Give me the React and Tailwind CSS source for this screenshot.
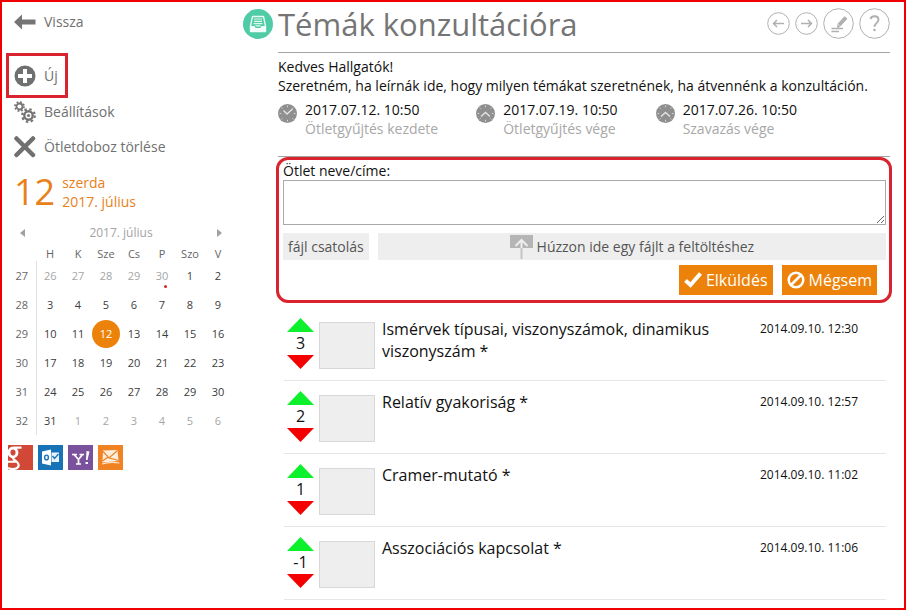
import { useState } from 'react';

const weeks = [
  { no: 27, days: [26, 27, 28, 29, 30, 1, 2] },
  { no: 28, days: [3, 4, 5, 6, 7, 8, 9] },
  { no: 29, days: [10, 11, 12, 13, 14, 15, 16] },
  { no: 30, days: [17, 18, 19, 20, 21, 22, 23] },
  { no: 31, days: [24, 25, 26, 27, 28, 29, 30] },
  { no: 32, days: [31, 1, 2, 3, 4, 5, 6] },
];

const deadlines = [
  { date: '2017.07.12. 10:50', label: 'Ötletgyűjtés kezdete', down: true },
  { date: '2017.07.19. 10:50', label: 'Ötletgyűjtés vége' },
  { date: '2017.07.26. 10:50', label: 'Szavazás vége' },
];

const ideas = [
  { title: 'Ismérvek típusai, viszonyszámok, dinamikus viszonyszám *', votes: 3, date: '2014.09.10. 12:30' },
  { title: 'Relatív gyakoriság *', votes: 2, date: '2014.09.10. 12:57' },
  { title: 'Cramer-mutató *', votes: 1, date: '2014.09.10. 11:02' },
  { title: 'Asszociációs kapcsolat *', votes: -1, date: '2014.09.10. 11:06' },
];

function BackIcon() {
  return (
    <svg className="w-[22px] h-[22px] shrink-0" viewBox="0 0 22 22" fill="#757575">
      <path d="M0 11L8 3.5V8.500H21.500V13.500H8V18.500Z" />
    </svg>
  );
}

function PlusIcon() {
  return (
    <svg className="w-[22px] h-[22px] shrink-0" viewBox="0 0 22 22">
      <circle cx="11" cy="11" r="10.500" fill="#707070" />
      <path d="M11 4V18M4 11H18" stroke="#fff" strokeWidth="4" />
    </svg>
  );
}

function GearsIcon() {
  return (
    <svg className="w-[22px] h-[22px] shrink-0" viewBox="0 0 22 22" fill="none" stroke="#757575">
      <circle cx="5.500" cy="5.500" r="3" strokeWidth="1.800" />
      <circle cx="5.500" cy="5.500" r="4.500" strokeWidth="1.800" strokeDasharray="1.770 1.770" />
      <circle cx="14.500" cy="14.500" r="4.200" strokeWidth="2.400" />
      <circle cx="14.500" cy="14.500" r="6.300" strokeWidth="2.200" strokeDasharray="2.475 2.475" />
      <circle cx="14.500" cy="14.500" r="1.600" fill="#757575" stroke="none" />
    </svg>
  );
}

function CrossIcon() {
  return (
    <svg className="w-[22px] h-[22px] shrink-0" viewBox="0 0 22 22" stroke="#707070" strokeWidth="4.500" strokeLinecap="round">
      <path d="M2.500 2.500L19 19M19 2.500L2.500 19" />
    </svg>
  );
}

function BoxIcon() {
  return (
    <svg className="w-[30px] h-[30px] shrink-0" viewBox="0 0 30 30" fill="none">
      <circle cx="15" cy="15" r="15" fill="#4fcba5" />
      <path d="M9.500 7.500H20.500L22.500 17V22.500H7.500V17Z" stroke="#e9fbf5" strokeWidth="1.400" strokeLinejoin="round" />
      <path d="M7.500 17H11.500L12.500 19H17.500L18.500 17H22.500V22.500H7.500Z" fill="#f4fffb" />
      <path d="M11 10H19M11 12.300H19M10.500 14.600H19.500M12.500 16.800H17.500" stroke="#e2f9f1" strokeWidth="1.200" />
    </svg>
  );
}

function ClockIcon({ down }) {
  return (
    <svg className="w-[19px] h-[19px] mt-1 shrink-0" viewBox="0 0 19 19" fill="none">
      <circle cx="9.500" cy="9.500" r="9.500" fill="#8f8f8f" />
      <path d={down ? 'M5.500 6.500L9 10L14.500 5' : 'M5 12.500L9.500 8.500L14 12.500'} stroke="#e2e2e2" strokeWidth="1.500" />
      <path d="M9.500 1.500V3.200M9.500 15.800V17.500M1.500 9.500H3.200M15.800 9.500H17.500M3.600 3.600L4.600 4.600M14.400 14.400L15.400 15.400M3.600 15.400L4.600 14.400M15.400 3.600L14.400 4.600" stroke="#d8d8d8" />
    </svg>
  );
}

function MenuItem({ icon, children, className = '' }) {
  return (
    <button type="button" className={`flex items-center gap-2 h-7 pl-3 text-[#707070] ${className}`}>
      {icon}
      <span>{children}</span>
    </button>
  );
}

function Calendar() {
  return (
    <div className="w-56 ml-1.5 mt-3">
      <div className="flex items-center justify-between h-5 pl-3 pr-2.5 text-xs text-[#a3a3a3]">
        <button type="button" aria-label="Előző hónap">
          <svg className="w-[5px] h-2" viewBox="0 0 5 8" fill="#a0a0a0"><path d="M5 0V8L0 4Z" /></svg>
        </button>
        <span>2017. július</span>
        <button type="button" aria-label="Következő hónap">
          <svg className="w-[5px] h-2" viewBox="0 0 5 8" fill="#a0a0a0"><path d="M0 0V8L5 4Z" /></svg>
        </button>
      </div>
      <table className="w-full mt-1 table-fixed text-center text-[11px] leading-[14px] text-[#3c3c3c]">
        <thead>
          <tr className="text-[#666]">
            <th className="w-7 p-0" />
            {['H', 'K', 'Sze', 'Cs', 'P', 'Szo', 'V'].map((d) => (
              <th key={d} className="p-0 font-normal">{d}</th>
            ))}
          </tr>
        </thead>
        <tbody>
          {weeks.map((week, w) => (
            <tr key={week.no} className="h-[29px]">
              <th className="p-0 font-normal text-[#666] border-r border-[#e2e2e2]">{week.no}</th>
              {week.days.map((day, i) => {
                const outside = (w === 0 && day > 20) || (w === 5 && day < 10);
                const today = w === 2 && day === 12;
                const marked = w === 0 && day === 30;
                return (
                  <td key={i} className={`p-0 ${outside ? 'text-[#a5a5a5]' : ''}`}>
                    {today ? (
                      <span className="flex items-center justify-center size-7 mx-auto rounded-full bg-[#ec8209] text-white">{day}</span>
                    ) : (
                      <span className="relative">
                        {day}
                        {marked && <i className="absolute left-2 top-[17px] size-[3px] rounded-full bg-[#d8232f]" />}
                      </span>
                    )}
                  </td>
                );
              })}
            </tr>
          ))}
        </tbody>
      </table>
    </div>
  );
}

function ExportLinks() {
  return (
    <div className="flex gap-[5px] ml-1.5 mt-2.5">
      <a href="#google" aria-label="Google">
        <svg className="size-[25px]" viewBox="0 0 25 25" fill="none">
          <path d="M0 0H25V25H0Z" fill="#d14836" />
          <g stroke="#fff">
            <ellipse cx="5" cy="7.500" rx="4" ry="4.500" strokeWidth="2.800" />
            <path d="M6 2.600H13.500M5.500 12C4 14.500 7 15 9 17C12.500 20.500 10 24 5 24C2 24 0 23 0 23M0 17C2 16.500 5 16.500 8 16.500" strokeWidth="2.200" />
          </g>
        </svg>
      </a>
      <a href="#outlook" aria-label="Outlook">
        <svg className="size-[25px]" viewBox="0 0 25 25" fill="none">
          <path d="M0 0H25V25H0Z" fill="#1673b8" />
          <path d="M4 6.500L13 4.500V20.500L4 18.500Z" fill="#fff" />
          <ellipse cx="8.500" cy="12.500" rx="1.900" ry="2.400" stroke="#1673b8" strokeWidth="1.400" />
          <path d="M13.500 7.500H21V17H13.500Z" fill="#e8f2fa" />
          <path d="M14.500 11L16.500 13.500L20.500 9" stroke="#1673b8" strokeWidth="1.300" />
        </svg>
      </a>
      <a href="#yahoo" aria-label="Yahoo">
        <svg className="size-[25px]" viewBox="0 0 25 25" fill="none">
          <path d="M0 0H25V25H0Z" fill="#7a519d" />
          <path d="M4 9.500H9M11.500 9.500H16M6 9.500L10.500 14.500L14.500 9.500M10.500 14V19M8 19H13" stroke="#fff" strokeWidth="1.700" />
          <path d="M18.500 6L21.500 6.500L19.500 15H18ZM17.500 17H20V19H17.500Z" fill="#fff" />
        </svg>
      </a>
      <a href="#mail" aria-label="E-mail">
        <svg className="size-[25px]" viewBox="0 0 25 25" fill="none">
          <path d="M0 0H25V25H0Z" fill="#f08223" />
          <path d="M5 5.500L19.500 5L20.500 16L4.500 17.500Z" fill="#fdeedd" />
          <path d="M5 6.500L11 13L19.500 5.500M4.500 16L9.500 12.500L20.500 15.500" stroke="#f08223" strokeWidth="1.200" />
          <path d="M4 19C10 17 15 17 21.500 18" stroke="#fde0c4" strokeWidth="1.200" />
        </svg>
      </a>
    </div>
  );
}

function Sidebar() {
  return (
    <aside className="w-[241px] shrink-0">
      <MenuItem icon={<BackIcon />} className="mt-1.5">Vissza</MenuItem>
      <div className="flex items-center w-[62px] h-[45px] ml-1 mt-[17px] border-3 border-[#d9232e]">
        <button type="button" className="flex items-center gap-2 pl-[5px] text-[#707070]">
          <PlusIcon />
          <span>Új</span>
        </button>
      </div>
      <MenuItem icon={<GearsIcon />}>Beállítások</MenuItem>
      <MenuItem icon={<CrossIcon />} className="mt-[7px]">Ötletdoboz törlése</MenuItem>
      <div className="flex items-center h-[38px] mt-3 ml-3 gap-[7px] text-[#e8811a]">
        <span className="text-4xl">12</span>
        <p className="leading-[19px]">szerda<br />2017. július</p>
      </div>
      <Calendar />
      <ExportLinks />
    </aside>
  );
}

function HeaderButtons() {
  return (
    <div className="flex items-center gap-[5px] text-[#b0b0b0]">
      <button type="button" aria-label="Előző">
        <svg className="size-[23px]" viewBox="0 0 23 23" fill="none" stroke="currentColor">
          <circle cx="11.500" cy="11.500" r="10.800" />
          <path d="M17 11.500H6.500M10 8L6.500 11.500L10 15" strokeWidth="1.500" />
        </svg>
      </button>
      <button type="button" aria-label="Következő">
        <svg className="size-[23px]" viewBox="0 0 23 23" fill="none" stroke="currentColor">
          <circle cx="11.500" cy="11.500" r="10.800" />
          <path d="M6 11.500H16.500M13 8L16.500 11.500L13 15" strokeWidth="1.500" />
        </svg>
      </button>
      <button type="button" aria-label="Szerkesztés">
        <svg className="size-[31px]" viewBox="0 0 31 31" fill="none" stroke="currentColor">
          <circle cx="15.500" cy="15.500" r="14.800" />
          <path d="M16 17L23 9.500" strokeWidth="4" />
          <path d="M14 20L14.500 16L17.500 18.800Z" fill="currentColor" stroke="none" />
          <path d="M8.500 20.500H20M8.500 23.500H16" strokeWidth="1.300" />
        </svg>
      </button>
      <button type="button" aria-label="Súgó">
        <svg className="size-[31px]" viewBox="0 0 31 31" fill="none" stroke="currentColor">
          <circle cx="15.500" cy="15.500" r="14.800" />
          <path d="M11.500 11C12 9 13.500 8.300 15.500 8.300C18 8.300 19.500 9.800 19.500 11.800C19.500 14.800 15.500 15 15.500 18.800" strokeWidth="1.900" />
          <circle cx="15.500" cy="22" r="1.300" fill="currentColor" stroke="none" />
        </svg>
      </button>
    </div>
  );
}

function IdeaForm() {
  const [text, setText] = useState('');

  return (
    <form className="-mx-0.5 pl-1 pr-[3px] pt-0.5 pb-[5px] border-3 border-[#d9232e] rounded-xl" onSubmit={(e) => e.preventDefault()}>
      <label htmlFor="idea" className="block h-[18px] leading-[18px]">Ötlet neve/címe:</label>
      <textarea
        id="idea"
        value={text}
        onChange={(e) => setText(e.target.value)}
        className="block w-full h-[45px] border border-[#a9a9a9] resize"
      />
      <div className="flex gap-[9px] mt-2 text-[#555]">
        <button type="button" className="h-[27px] px-[5px] bg-[#eee]">fájl csatolás</button>
        <div className="flex flex-1 items-center justify-center gap-1 h-[27px] bg-[#eee]">
          <svg className="w-[23px] h-6" viewBox="0 0 23 24" fill="none">
            <path d="M0 0H23V13H0Z" fill="#b5b5b5" />
            <path d="M11.500 5V13M5.500 11L11.500 5L17.500 11" stroke="#eee" strokeWidth="2" />
            <path d="M11.500 13V24" stroke="#c4c4c4" strokeWidth="2" />
          </svg>
          <span>Húzzon ide egy fájlt a feltöltéshez</span>
        </div>
      </div>
      <div className="flex justify-end gap-[9px] mt-[5px] pr-[9px] text-base text-white">
        <button type="submit" className="flex items-center gap-1 h-[30px] px-[5px] bg-[#ec8209]">
          <svg className="w-[18px] h-[18px]" viewBox="0 0 18 18" fill="none" stroke="#fff" strokeWidth="4">
            <path d="M1.500 9.500L6.500 14L16.500 2.500" />
          </svg>
          Elküldés
        </button>
        <button type="button" className="flex items-center gap-1 h-[30px] px-[5px] bg-[#ec8209]" onClick={() => setText('')}>
          <svg className="w-[18px] h-[18px]" viewBox="0 0 18 18" fill="none" stroke="#fff" strokeWidth="2.500">
            <circle cx="9" cy="9" r="7.300" />
            <path d="M4 14L14 4" />
          </svg>
          Mégsem
        </button>
      </div>
    </form>
  );
}

function IdeaRow({ idea }) {
  return (
    <li className="flex items-start h-[73px] pt-3.5 border-b border-[#e6e6e6]">
      <div className="flex flex-col items-center w-[35px] -mt-1 pr-0.5">
        <button type="button" aria-label="Mellette">
          <svg className="block w-[27px] h-[14px]" viewBox="0 0 27 14"><path d="M13.500 0L27 14H0Z" fill="#0df02c" /></svg>
        </button>
        <span className="h-[23px] text-base leading-[22px]">{idea.votes}</span>
        <button type="button" aria-label="Ellene">
          <svg className="block w-[27px] h-[14px]" viewBox="0 0 27 14"><path d="M0 0H27L13.500 14Z" fill="#f40000" /></svg>
        </button>
      </div>
      <div className="w-14 h-[47px] shrink-0 bg-[#eee] border border-[#d8d8d8]" />
      <p className="flex-1 -mt-1 pl-[7px] pr-8 text-base leading-[22px]">{idea.title}</p>
      <time className="w-[126px] -mt-1 text-xs leading-[22px]">{idea.date}</time>
    </li>
  );
}

export default function App() {
  return (
    <div className="flex min-h-screen bg-white border-2 border-[#f00000] font-['Open_Sans',sans-serif] text-sm text-[#111]">
      <Sidebar />
      <main className="flex-1 min-w-0 pr-[14px]">
        <header className="flex items-center h-[43px] gap-[5px]">
          <BoxIcon />
          <h1 className="flex-1 text-[31px] leading-10 text-[#757575]">Témák konzultációra</h1>
          <HeaderButtons />
        </header>
        <div className="ml-[35px] mt-[7px]">
          <section className="h-[105px] pt-1 border-y border-[#a3a3a3] leading-[19px]">
            <p>Kedves Hallgatók!<br />Szeretném, ha leírnák ide, hogy milyen témákat szeretnének, ha átvennénk a konzultáción.</p>
            <ul className="flex gap-[38px] mt-[5px]">
              {deadlines.map((d) => (
                <li key={d.date} className="flex gap-2">
                  <ClockIcon down={d.down} />
                  <div>
                    <p>{d.date}</p>
                    <p className="text-[#a8a8a8]">{d.label}</p>
                  </div>
                </li>
              ))}
            </ul>
          </section>
          <IdeaForm />
          <ul className="pl-1.5 mt-[5px] pr-1">
            {ideas.map((idea) => (
              <IdeaRow key={idea.title} idea={idea} />
            ))}
          </ul>
        </div>
      </main>
    </div>
  );
}
